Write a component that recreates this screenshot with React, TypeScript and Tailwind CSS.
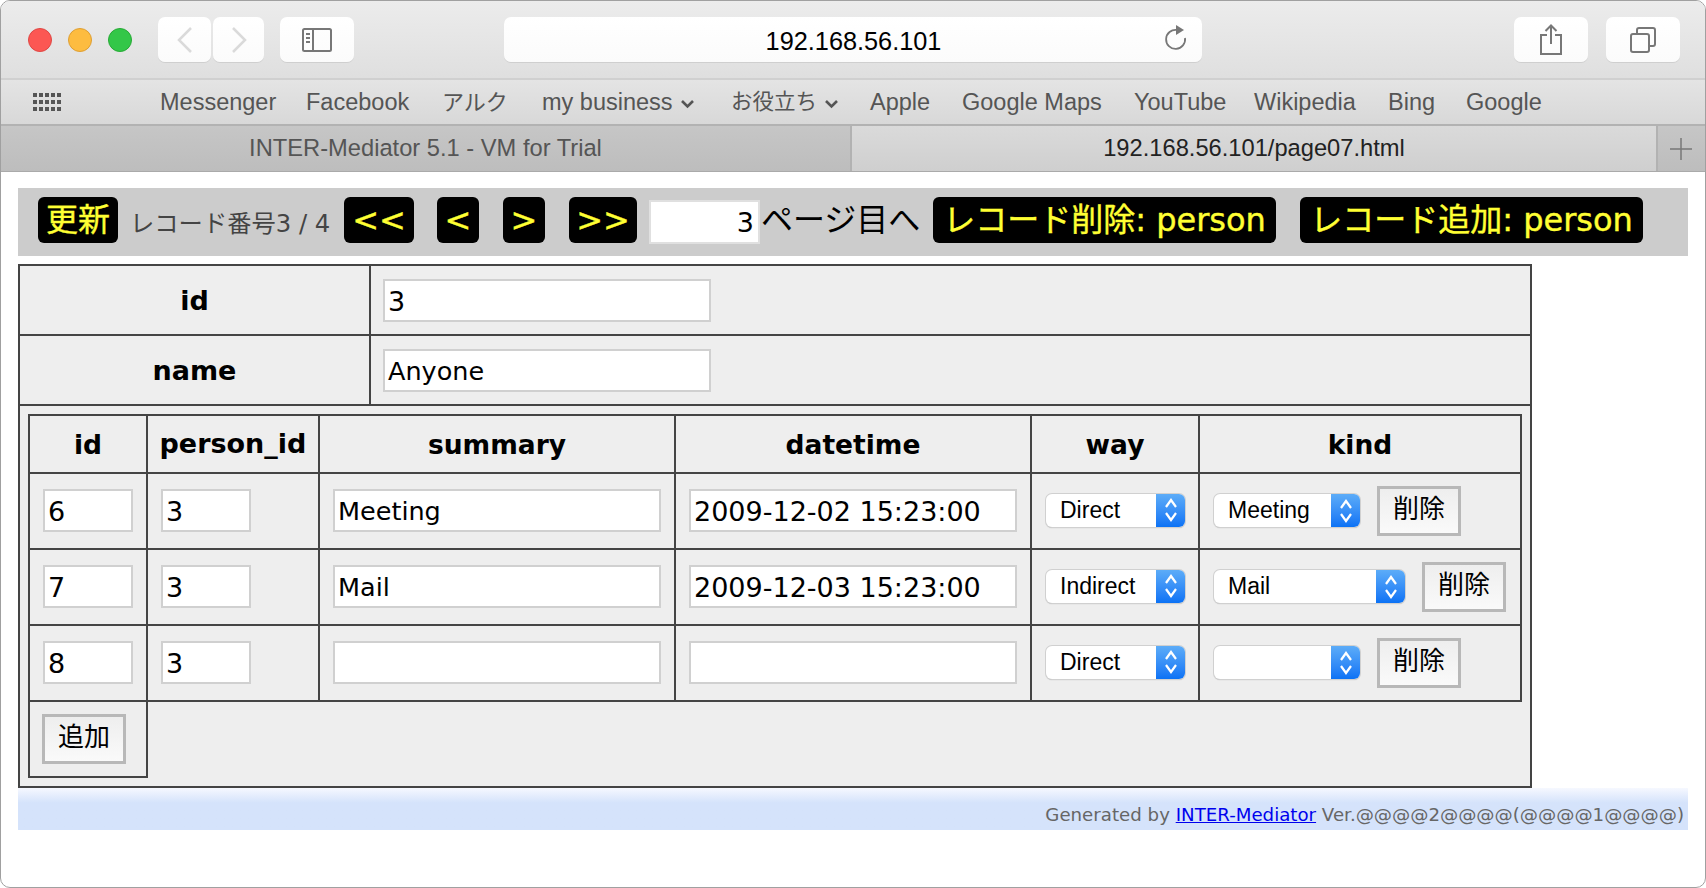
import React from 'react';

const pageFont = "font-['DejaVu_Sans','Noto_Sans_CJK_JP',sans-serif]";
const chromeFont = "font-['Liberation_Sans','Noto_Sans_CJK_JP',sans-serif]";

const bookmarks = [
    { label: 'Messenger', w: 'w-[146px]', size: 'text-[23.5px]' },
    { label: 'Facebook', w: 'w-[136px]', size: 'text-[23.5px]' },
    { label: 'アルク', w: 'w-[100px]', size: 'text-[22px]' },
    { label: 'my business', w: 'w-[189px]', size: 'text-[23.5px]', menu: true },
    { label: 'お役立ち', w: 'w-[139px]', size: 'text-[21.5px]', menu: true },
    { label: 'Apple', w: 'w-[92px]', size: 'text-[23.5px]' },
    { label: 'Google Maps', w: 'w-[172px]', size: 'text-[23.5px]' },
    { label: 'YouTube', w: 'w-[120px]', size: 'text-[23.5px]' },
    { label: 'Wikipedia', w: 'w-[134px]', size: 'text-[23.5px]' },
    { label: 'Bing', w: 'w-[78px]', size: 'text-[23.5px]' },
    { label: 'Google', w: 'w-[90px]', size: 'text-[23.5px]' },
];

const rows = [
    { id: '6', pid: '3', summary: 'Meeting', datetime: '2009-12-02 15:23:00', way: 'Direct', kind: 'Meeting', kindW: 'w-[146px]' },
    { id: '7', pid: '3', summary: 'Mail', datetime: '2009-12-03 15:23:00', way: 'Indirect', kind: 'Mail', kindW: 'w-[191px]' },
    { id: '8', pid: '3', summary: '', datetime: '', way: 'Direct', kind: '', kindW: 'w-[146px]' },
];

const ToolButton: React.FC<{ className: string; children?: React.ReactNode }> = ({ className, children }) => (
    <div className={`h-[45px] rounded-[7px] flex items-center justify-center bg-gradient-to-b from-white to-[#fbfbfb] shadow-[0_1px_0_#cfcfcf] ${className}`}>
        {children}
    </div>
);

const YellowButton: React.FC<{ className: string; children: React.ReactNode }> = ({ className, children }) => (
    <div className={`h-[46px] rounded-[6px] bg-black text-[#ffff33] text-[32px] leading-[47px] text-center whitespace-nowrap [-webkit-text-stroke:0.4px_#ffff33] ${className}`}>
        {children}
    </div>
);

const TextBox: React.FC<{ value: string; className: string; latin?: boolean }> = ({ value, className, latin }) => (
    <div className={`h-[43px] bg-white border-2 border-[#d0d0d0] leading-[41px] text-black pl-[3px] ${latin ? 'text-[25.5px]' : 'text-[27px]'} ${className}`}>{value}</div>
);

const SelectBox: React.FC<{ value: string; className: string }> = ({ value, className }) => (
    <div className={`h-[33px] flex rounded-[6px] bg-white shadow-[0_0_0_1px_#d0d0d0,0_1px_1px_#aaa] ${chromeFont} ${className}`}>
        <div className="flex-1 pl-[14px] text-[23px] leading-[33px] text-black">{value}</div>
        <div className="w-[29px] rounded-r-[6px] bg-gradient-to-b from-[#5cacf8] to-[#0a72f5] flex items-center justify-center">
            <svg width="16" height="28" viewBox="0 0 16 28" fill="none" stroke="white" strokeWidth="2.2">
                <path d="M3 11 L8 4 L13 11" />
                <path d="M3 17 L8 24 L13 17" />
            </svg>
        </div>
    </div>
);

const GrayButton: React.FC<{ label: string; className?: string }> = ({ label, className = '' }) => (
    <div className={`w-[84px] h-[50px] border-[3px] border-[#b8b8b8] bg-gradient-to-b from-[#eeeeee] to-[#fafafa] text-[26px] leading-[40px] text-center text-black ${className}`}>
        {label}
    </div>
);

const Chevron = () => (
    <svg width="15" height="10" viewBox="0 0 15 10" fill="none" stroke="#555" strokeWidth="2.6" className="ml-[7px] mt-[2px]">
        <path d="M2 2 L7.5 7.5 L13 2" />
    </svg>
);

const cell = 'border-2 border-[#444] bg-[#eeeeee]';

const App: React.FC = () => {
    return (
        <div className={`w-[1706px] h-[888px] bg-white border border-[#a0a0a0] rounded-[10px] overflow-hidden ${pageFont}`}>
            {/* ブラウザのツールバー */}
            <div className={`h-[79px] flex items-center bg-gradient-to-b from-[#ececec] to-[#dfdfdf] border-b-2 border-[#d0d0d0] ${chromeFont}`}>
                <div className="flex gap-[16px] ml-[27px] mr-[26px]">
                    <div className="w-[24px] h-[24px] rounded-full bg-[#fc5753] border border-[#df4744]" />
                    <div className="w-[24px] h-[24px] rounded-full bg-[#fdbc40] border border-[#de9f34]" />
                    <div className="w-[24px] h-[24px] rounded-full bg-[#33c748] border border-[#27aa35]" />
                </div>
                <ToolButton className="w-[53px]">
                    <svg width="18" height="28" viewBox="0 0 18 28" fill="none" stroke="#dadada" strokeWidth="2.5"><path d="M15 2 L3 14 L15 26" /></svg>
                </ToolButton>
                <ToolButton className="w-[51px] ml-[2px]">
                    <svg width="18" height="28" viewBox="0 0 18 28" fill="none" stroke="#dadada" strokeWidth="2.5"><path d="M3 2 L15 14 L3 26" /></svg>
                </ToolButton>
                <ToolButton className="w-[74px] ml-[16px]">
                    <svg width="30" height="24" viewBox="0 0 30 24" fill="none" stroke="#777" strokeWidth="2">
                        <rect x="1" y="1" width="28" height="22" rx="1.5" />
                        <path d="M11 1 V23" />
                        <path d="M4 6 H8 M4 10 H8 M4 14 H8" />
                    </svg>
                </ToolButton>
                <ToolButton className="w-[698px] ml-[150px] relative">
                    <span className="text-[25.3px] text-black mt-[5px] ml-[1px]">192.168.56.101</span>
                    <svg width="24" height="28" viewBox="0 0 24 28" fill="none" stroke="#777" strokeWidth="1.8" className="absolute right-[14px] top-[7px]">
                        <path d="M13 6 A9.5 9.5 0 1 0 21 14" />
                        <path d="M12 1 L20 6 L12 11 Z" fill="#777" stroke="none" />
                    </svg>
                </ToolButton>
                <ToolButton className="w-[74px] ml-[312px]">
                    <svg width="24" height="32" viewBox="0 0 24 32" fill="none" stroke="#777" strokeWidth="2">
                        <path d="M8 11 H2 V30 H22 V11 H16" />
                        <path d="M12 20 V2 M6.5 7 L12 1.5 L17.5 7" />
                    </svg>
                </ToolButton>
                <ToolButton className="w-[74px] ml-[18px]">
                    <svg width="26" height="26" viewBox="0 0 26 26" fill="none" stroke="#777" strokeWidth="2">
                        <rect x="1" y="7" width="18" height="18" rx="2" />
                        <path d="M7 7 V3 Q7 1 9 1 H23 Q25 1 25 3 V17 Q25 19 23 19 H19" />
                    </svg>
                </ToolButton>
            </div>

            {/* ブックマークバー */}
            <div className={`h-[46px] flex items-center bg-gradient-to-b from-[#e4e4e4] to-[#d8d8d8] border-b-2 border-[#b2b2b2] ${chromeFont}`}>
                <div className="grid grid-cols-5 gap-x-[2px] gap-y-[3px] w-[28px] ml-[32px] mr-[99px]">
                    {Array.from({ length: 15 }).map((_, i) => (
                        <div key={i} className="w-[4px] h-[4px] bg-[#555]" />
                    ))}
                </div>
                {bookmarks.map((b) => (
                    <div key={b.label} className={`${b.w} ${b.size} flex items-center mt-[1px] text-[#555] whitespace-nowrap`}>
                        {b.label}
                        {b.menu && <Chevron />}
                    </div>
                ))}
            </div>

            {/* タブ */}
            <div className={`h-[46px] flex text-[23.7px] border-b border-[#aaa] ${chromeFont}`}>
                <div className="w-[851px] bg-gradient-to-b from-[#c6c6c6] to-[#bdbdbd] text-[#555] flex items-center justify-center border-r-2 border-[#b2b2b2]">
                    INTER-Mediator 5.1 - VM for Trial
                </div>
                <div className="flex-1 bg-gradient-to-b from-[#dadada] to-[#cfcfcf] text-[#222] flex items-center justify-center">
                    192.168.56.101/page07.html
                </div>
                <div className="w-[49px] pr-[2px] bg-gradient-to-b from-[#c6c6c6] to-[#bdbdbd] border-l-2 border-[#b2b2b2] flex items-center justify-center">
                    <svg width="24" height="24" viewBox="0 0 24 24" stroke="#777" strokeWidth="1.5"><path d="M12 1 V23 M1 12 H23" /></svg>
                </div>
            </div>

            {/* ページ本体 */}
            <div className="pt-[16px] px-[17px]">
                <div className="h-[68px] w-[1670px] bg-[#cccccc] flex items-center pl-[20px] pb-[5px]">
                    <YellowButton className="w-[80px]">更新</YellowButton>
                    <span className="ml-[12px] mt-[9px] w-[214px] text-[24.3px] text-[#444] whitespace-nowrap">レコード番号3 / 4</span>
                    <YellowButton className="w-[70px]">&lt;&lt;</YellowButton>
                    <YellowButton className="w-[42px] ml-[23px]">&lt;</YellowButton>
                    <YellowButton className="w-[42px] ml-[24px]">&gt;</YellowButton>
                    <YellowButton className="w-[68px] ml-[24px]">&gt;&gt;</YellowButton>
                    <div className="w-[111px] h-[44px] ml-[12px] mt-[5px] bg-white border-2 border-[#e0e0e0] text-[27px] leading-[42px] text-right pr-[4px] text-black">3</div>
                    <span className="ml-[1px] mt-[1px] w-[172px] text-[32px] text-black whitespace-nowrap">ページ目へ</span>
                    <YellowButton className="w-[343px]">レコード削除: person</YellowButton>
                    <YellowButton className="w-[343px] ml-[24px]">レコード追加: person</YellowButton>
                </div>

                <table className="mt-[8px] w-[1514px] table-fixed border-collapse text-black">
                    <colgroup>
                        <col className="w-[351px]" />
                        <col />
                    </colgroup>
                    <tbody>
                        <tr className="h-[70px]">
                            <th className={`${cell} text-[27px] pt-[2px]`}>id</th>
                            <td className={`${cell} pl-[12px]`}><TextBox value="3" className="w-[328px]" /></td>
                        </tr>
                        <tr className="h-[70px]">
                            <th className={`${cell} text-[27px] pt-[2px]`}>name</th>
                            <td className={`${cell} pl-[12px]`}><TextBox value="Anyone" latin className="w-[328px]" /></td>
                        </tr>
                        <tr>
                            <td colSpan={2} className={`${cell} p-[8px]`}>
                                <table className="w-[1494px] table-fixed border-collapse">
                                    <colgroup>
                                        <col className="w-[118px]" />
                                        <col className="w-[172px]" />
                                        <col className="w-[356px]" />
                                        <col className="w-[356px]" />
                                        <col className="w-[168px]" />
                                        <col />
                                    </colgroup>
                                    <thead>
                                        <tr className="h-[58px]">
                                            {['id', 'person_id', 'summary', 'datetime', 'way', 'kind'].map((h) => (
                                                <th key={h} className={`${cell} ${h === 'person_id' ? 'text-[27px]' : 'text-[26.5px]'} font-bold pt-[1px]`}>{h}</th>
                                            ))}
                                        </tr>
                                    </thead>
                                    <tbody>
                                        {rows.map((r) => (
                                            <tr key={r.id} className="h-[76px]">
                                                <td className={`${cell} pl-[13px] pb-[2px]`}><TextBox value={r.id} className="w-[90px]" /></td>
                                                <td className={`${cell} pl-[13px] pb-[2px]`}><TextBox value={r.pid} className="w-[90px]" /></td>
                                                <td className={`${cell} pl-[13px] pb-[2px]`}><TextBox value={r.summary} latin className="w-[328px]" /></td>
                                                <td className={`${cell} pl-[13px] pb-[2px]`}><TextBox value={r.datetime} className="w-[328px]" /></td>
                                                <td className={`${cell} pl-[14px] pb-[2px]`}><SelectBox value={r.way} className="w-[139px]" /></td>
                                                <td className={`${cell} pl-[14px]`}>
                                                    <div className="flex items-center gap-[17px]">
                                                        <SelectBox value={r.kind} className={`${r.kindW} mb-[1px]`} />
                                                        <GrayButton label="削除" />
                                                    </div>
                                                </td>
                                            </tr>
                                        ))}
                                        <tr className="h-[76px]">
                                            <td className={`${cell} pl-[12px]`}><GrayButton label="追加" /></td>
                                        </tr>
                                    </tbody>
                                </table>
                            </td>
                        </tr>
                    </tbody>
                </table>

                <div className="w-[1670px] h-[42px] bg-gradient-to-b from-[#f6f8ff] from-0% to-[#d5e3fb] to-35% text-right pr-[4px] pt-[13px] text-[18.2px] leading-[28px] text-[#666]">
                    Generated by <a href="#" className="text-[#0000ee] underline">INTER-Mediator</a> Ver.@@@@2@@@@(@@@@1@@@@)
                </div>
            </div>
        </div>
    );
};

export default App;
